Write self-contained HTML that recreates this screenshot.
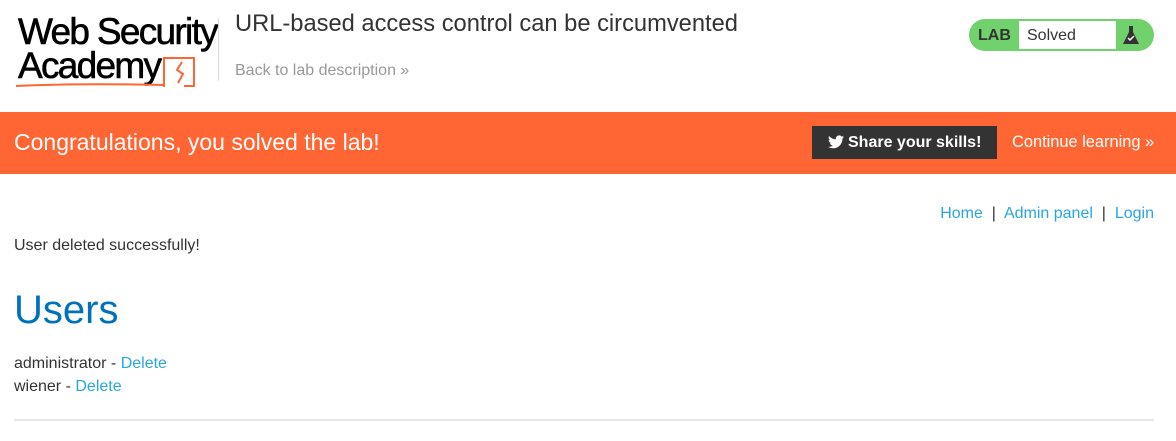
<!DOCTYPE html>
<html><head><style>
body{margin:0;width:1176px;height:441px;background:#fff;font-family:"Liberation Sans",sans-serif;color:#333;position:relative;overflow:hidden}
.a{position:absolute}
</style></head><body>
<div class="a" style="left:18px;top:15px;font-size:37px;line-height:34px;letter-spacing:-1.7px;color:#000;-webkit-text-stroke:0.6px #000">Web Security<br>Academy</div>
<svg class="a" style="left:14px;top:52px" width="200" height="38"><path d="M150 35 V6 H180 V34 H170" fill="none" stroke="#ff6633" stroke-width="2"/><path d="M168 10 l-5 8 l6 4 l-5 9" fill="none" stroke="#ff6633" stroke-width="2"/><path d="M2 34 Q60 31 150 33" stroke="#ff6633" stroke-width="2" fill="none"/></svg>
<div class="a" style="left:218px;top:18px;width:1px;height:63px;background:#ddd"></div>
<div class="a" style="left:235px;top:11px;font-size:23.7px;color:#333">URL-based access control can be circumvented</div>
<div class="a" style="left:235px;top:62px;font-size:16px;color:#999">Back to lab description »</div>
<div class="a" style="left:969px;top:19px;width:185px;height:32px;border-radius:16px;background:#70d16d"></div>
<div class="a" style="left:978px;top:27px;font-size:16px;font-weight:bold;color:#333">LAB</div>
<div class="a" style="left:1019px;top:21px;width:97px;height:28px;background:#fff;font-size:16px;line-height:30px;text-indent:8px;color:#333">Solved</div>
<svg class="a" style="left:1122px;top:24px" width="18" height="22"><path d="M6 2h6M7 2v6l-6 12h16l-6-12V2" fill="#333"/><path d="M6 14l2 2 4-4" stroke="#fff" stroke-width="1.5" fill="none"/></svg>
<div class="a" style="left:0;top:112px;width:1176px;height:62px;background:#ff6633"></div>
<div class="a" style="left:14px;top:129px;font-size:23px;color:#fff">Congratulations, you solved the lab!</div>
<div class="a" style="left:812px;top:126px;width:185px;height:33px;background:#333;color:#fff;font-weight:bold;font-size:16px;line-height:33px;text-indent:36px">Share your skills!</div>
<svg class="a" style="left:828px;top:135px" width="16" height="14"><path d="M16 2c-.6.3-1.2.4-1.9.5.7-.4 1.2-1 1.4-1.8-.6.4-1.3.6-2 .8C12.9.8 12 .4 11.1.4 9.3.4 7.8 1.9 7.8 3.7c0 .3 0 .5.1.7C5.2 4.3 2.7 3 1.1 1 .8 1.5.7 2 .7 2.6c0 1.1.6 2.1 1.5 2.7-.5 0-1-.2-1.5-.4 0 1.6 1.1 2.9 2.6 3.2-.5.1-1 .2-1.5.1.4 1.3 1.6 2.3 3.1 2.3C3.7 11.4 2 12 .1 11.8 1.6 12.8 3.3 13.3 5.1 13.3c6 0 9.3-5 9.3-9.3v-.4c.7-.5 1.2-1 1.6-1.6z" fill="#fff"/></svg>
<div class="a" style="left:1012px;top:133px;font-size:16.4px;color:#fff">Continue learning »</div>
<div class="a" style="right:22px;top:205px;font-size:16px;color:#333"><span style="color:#29a6e0">Home</span> &nbsp;|&nbsp; <span style="color:#29a6e0">Admin panel</span> &nbsp;|&nbsp; <span style="color:#29a6e0">Login</span></div>
<div class="a" style="left:14px;top:237px;font-size:16px">User deleted successfully!</div>
<div class="a" style="left:14px;top:288px;font-size:40px;color:#0071bc">Users</div>
<div class="a" style="left:14px;top:352px;font-size:16px;line-height:23px">administrator - <span style="color:#29a6e0">Delete</span><br>wiener - <span style="color:#29a6e0">Delete</span></div>
<div class="a" style="left:14px;top:419px;width:1140px;height:2px;background:#e6e6e6"></div>
</body></html>
